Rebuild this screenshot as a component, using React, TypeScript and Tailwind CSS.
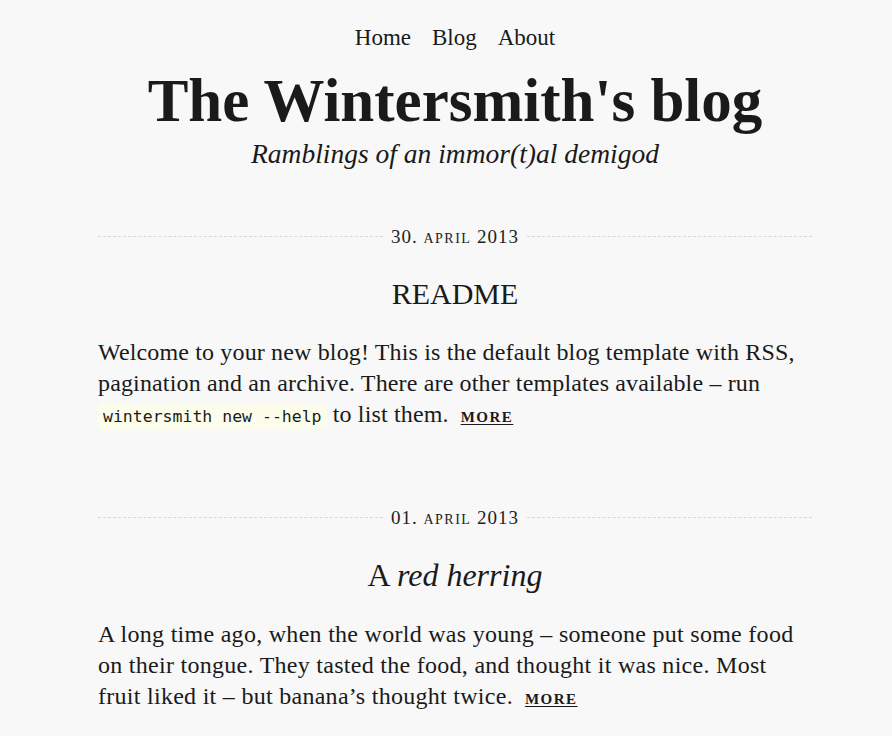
import React from 'react';

const serif = "font-['Liberation_Serif',serif]";

const DateRule = ({ day, year }: { day: string; year: string }) => (
  <div className="flex items-center gap-2">
    <div className="flex-1 border-t border-dashed border-[#d8d8d8]" />
    <div className="text-[19px] leading-none tracking-[1px] text-[#222]">
      {day} <span className="text-[14px] uppercase tracking-[1.5px]">april</span> {year}
    </div>
    <div className="flex-1 border-t border-dashed border-[#d8d8d8]" />
  </div>
);

const More = () => (
  <a href="#" className="ml-3 text-[15px] font-bold uppercase tracking-[1.5px] underline underline-offset-2 text-[#1a1a1a]">
    more
  </a>
);

export default function App() {
  return (
    <div className={`min-h-screen bg-[#f8f8f8] text-[#1a1a1a] ${serif}`}>
      <div className="ml-[98px] w-[714px] pt-[24px]">
        {/* Header */}
        <nav className="flex justify-center gap-[21px] text-[23px] leading-[28px]">
          <a href="#">Home</a>
          <a href="#">Blog</a>
          <a href="#">About</a>
        </nav>
        <h1 className="mt-[14px] text-center text-[61px] font-bold leading-[70px]">The Wintersmith's blog</h1>
        <p className="mt-[1px] text-center text-[27.5px] italic leading-[34px]">Ramblings of an immor(t)al demigod</p>

        {/* Post 1 */}
        <article className="mt-[56px]">
          <DateRule day="30." year="2013" />
          <h2 className="mt-[30px] text-center text-[30px] leading-[36px]">README</h2>
          <p className="mt-[25px] text-[24px] leading-[31px] tracking-[0.15px]">
            Welcome to your new blog! This is the default blog template with RSS, pagination and an archive. There are
            other templates available – run{' '}
            <code className="rounded-[4px] bg-[#fdfdeb] px-[5px] py-[3px] font-['DejaVu_Sans_Mono',monospace] text-[16.5px] tracking-normal">
              wintersmith new --help
            </code>{' '}
            to list them.
            <More />
          </p>
        </article>

        {/* Post 2 */}
        <article className="mt-[75px]">
          <DateRule day="01." year="2013" />
          <h2 className="mt-[30px] text-center text-[32px] leading-[36px]">
            A <em>red herring</em>
          </h2>
          <p className="mt-[26px] text-[24px] leading-[31px] tracking-[0.28px]">
            A long time ago, when the world was young – someone put some food on their tongue. They tasted the food, and
            thought it was nice. Most fruit liked it – but banana’s thought twice.
            <More />
          </p>
        </article>
      </div>
    </div>
  );
}
